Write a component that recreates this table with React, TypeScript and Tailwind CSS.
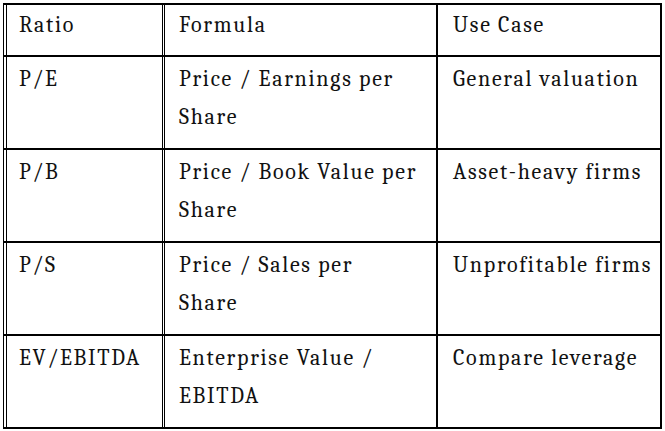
const rows = [
  { ratio: 'P/E', formula: ['Price / Earnings per', 'Share'], use: 'General valuation' },
  { ratio: 'P/B', formula: ['Price / Book Value per', 'Share'], use: 'Asset-heavy firms' },
  { ratio: 'P/S', formula: ['Price / Sales per', 'Share'], use: 'Unprofitable firms' },
  { ratio: 'EV/EBITDA', formula: ['Enterprise Value /', 'EBITDA'], use: 'Compare leverage' },
];

export default function App() {
  return (
    <div className="w-[665px] h-[431px] bg-white pt-[3px] pl-[3px] font-serif text-[22px] tracking-[1.7px] leading-[38px] text-[#111]">
      <div className="w-[659px] border-t-2 border-r-2 border-black">
        {/* Header */}
        <div className="flex h-[52px] border-b-2 border-black">
          <div className="w-[159px] border-l-4 border-double border-black pl-[12px] pt-[1px]">Ratio</div>
          <div className="w-[274px] border-l-[3px] border-double border-black pl-[14px] pt-[1px]">Formula</div>
          <div className="flex-1 border-l-2 border-black pl-[15px] pt-[1px]">Use Case</div>
        </div>
        {rows.map((r) => (
          <div key={r.ratio} className="flex h-[93px] border-b-2 border-black">
            <div className="w-[159px] border-l-4 border-double border-black pl-[12px] pt-[3px]">{r.ratio}</div>
            <div className="w-[274px] border-l-[3px] border-double border-black pl-[14px] pt-[3px]">
              {r.formula.map((l) => (
                <div key={l}>{l}</div>
              ))}
            </div>
            <div className="flex-1 border-l-2 border-black pl-[15px] pt-[3px]">{r.use}</div>
          </div>
        ))}
      </div>
    </div>
  );
}
